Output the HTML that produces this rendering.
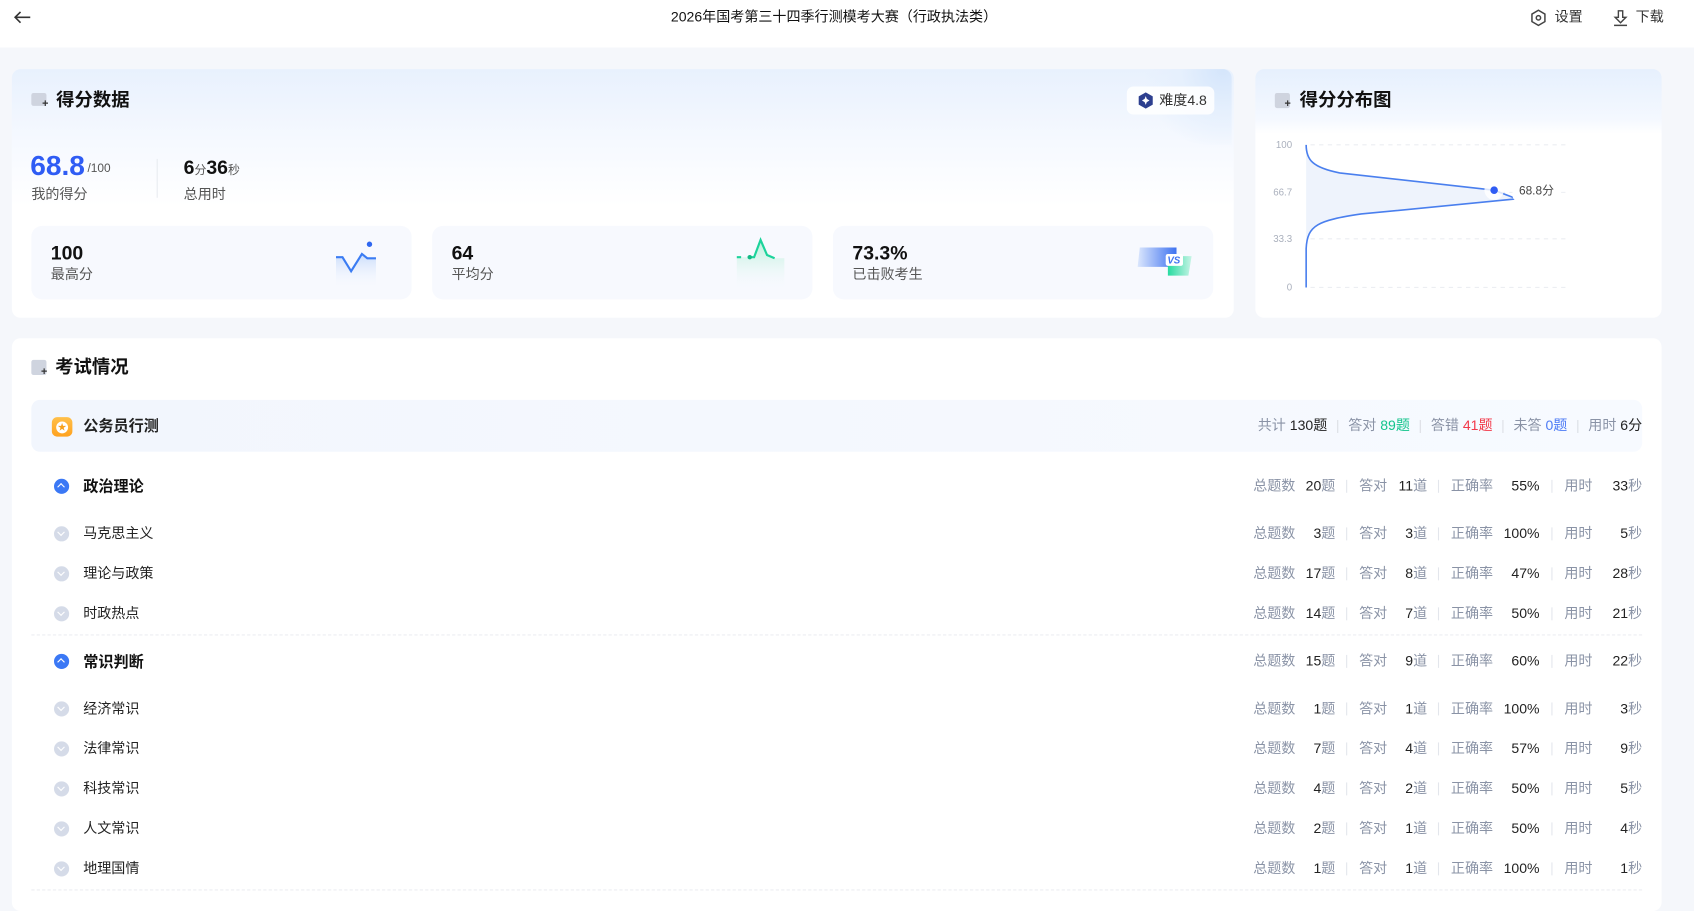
<!DOCTYPE html>
<html><head><meta charset="utf-8">
<style>
*{margin:0;padding:0;box-sizing:border-box}
html,body{width:1694px;height:897px;overflow:hidden;background:#f5f7fb}
body{font-family:"Liberation Sans","Noto Sans CJK SC",sans-serif;color:#222}
#w{position:absolute;left:0;top:0;width:1568px;height:831px;transform:scale(1.08036,1.0807);transform-origin:0 0;background:#f5f7fb}
.a{position:absolute;white-space:nowrap}
.card{position:absolute;background:#fff;border-radius:8px}
.ttl{font-size:17px;font-weight:bold;color:#111;line-height:22px}
.box{position:absolute;top:209px;width:352px;height:68px;background:#f7f9fe;border-radius:10px}
.box .n{position:absolute;left:18px;top:14px;font-size:18px;font-weight:bold;color:#111;line-height:22px}
.box .l{position:absolute;left:18px;top:36px;font-size:13px;color:#555;line-height:18px}
.row{position:absolute;left:0;width:1568px;height:20px;font-size:13px;line-height:18px}
.row>div{line-height:18px}
.row .nm{position:absolute;left:77px;top:0;color:#222}
.row .ic{position:absolute;left:50px;top:2px;width:14px;height:14px;border-radius:50%;background:#d5dbe8}
.row .ic:after{content:"";position:absolute;left:4px;top:3px;width:4px;height:4px;border-right:1.5px solid #fff;border-bottom:1.5px solid #fff;transform:rotate(45deg)}
.row.m .nm{font-weight:bold;font-size:14px;color:#111}
.row.m .ic{background:#3b78f5}
.row.m .ic:after{top:5px;transform:rotate(-135deg)}
.s{position:absolute;top:0;color:#8a93a6}
.v{position:absolute;top:0;color:#222;text-align:right}
.sep{position:absolute;top:3px;width:1px;height:12px;background:#e3e6ec}
.dash{position:absolute;left:29px;width:1491px;border-top:1px dashed #eceef2}
.hs{color:#dde0e6;margin:0 8px}
</style></head><body><div id="w">
<div class="a" style="left:0;top:0;width:1568px;height:44px;background:#fff"></div>
<svg class="a" style="left:12px;top:8px" width="18" height="16" viewBox="0 0 18 16"><path d="M16 8H2M7 3L2 8l5 5" fill="none" stroke="#333" stroke-width="1.5"/></svg>
<div class="a" style="left:0;width:1544px;top:7px;text-align:center;font-size:13px;color:#111;line-height:18px">2026年国考第三十四季行测模考大赛（行政执法类）</div>
<svg class="a" style="left:1416px;top:8px" width="16" height="17" viewBox="0 0 16 17"><path d="M8 1.5l6 3.5v7l-6 3.5-6-3.5v-7z" fill="none" stroke="#444" stroke-width="1.4"/><circle cx="8" cy="8.5" r="2" fill="none" stroke="#444" stroke-width="1.4"/></svg>
<div class="a" style="left:1439px;top:7px;font-size:13px;color:#333;line-height:18px">设置</div>
<svg class="a" style="left:1492px;top:8px" width="16" height="17" viewBox="0 0 16 17"><path d="M6 2h4v6h3l-5 5-5-5h3z" fill="none" stroke="#444" stroke-width="1.3"/><path d="M2 15.5h12" stroke="#444" stroke-width="1.4"/></svg>
<div class="a" style="left:1514px;top:7px;font-size:13px;color:#333;line-height:18px">下载</div>

<div class="card" style="left:11px;top:64px;width:1131px;height:230px;background:linear-gradient(180deg,#e8f1fd 0%,#f6f9ff 30%,#fff 55%)"></div>
<div class="a" style="left:1060px;top:64px;width:80px;height:70px;border-radius:0 8px 0 60px;background:radial-gradient(circle at 90% 0%,#d4e5fb 0,#e6f0fd 40%,rgba(255,255,255,0) 75%)"></div>
<div class="a" style="left:29px;top:86px;width:14px;height:12px;border-radius:2px;background:#cfd4df"></div>
<div class="a" style="left:39px;top:92px;font-size:10px;color:#333;font-weight:bold;line-height:10px">+</div>
<div class="a ttl" style="left:52px;top:82px">得分数据</div>
<div class="a" style="left:1043px;top:80px;width:81px;height:26px;background:rgba(255,255,255,.85);border-radius:6px"></div>
<svg class="a" style="left:1053px;top:85px" width="15" height="16" viewBox="0 0 15 16"><path d="M7.5 0.5l6.5 3.7v7.6l-6.5 3.7-6.5-3.7V4.2z" fill="#2c3f8f"/><path d="M7.5 4l1 2.5 2.5 1.5-2.5 1.5-1 2.5-1-2.5L4 8l2.5-1.5z" fill="#fff"/></svg>
<div class="a" style="left:1073px;top:84px;font-size:13px;color:#333;line-height:18px">难度4.8</div>

<div class="a" style="left:28px;top:138px;font-size:26px;font-weight:bold;color:#2f5cf4;line-height:30px">68.8</div>
<div class="a" style="left:81px;top:149px;font-size:11px;color:#555;line-height:14px">/100</div>
<div class="a" style="left:29px;top:171px;font-size:13px;color:#555;line-height:18px">我的得分</div>
<div class="a" style="left:145px;top:147px;width:1px;height:36px;background:#e8ebf0"></div>
<div class="a" style="left:170px;top:144px;font-size:18px;font-weight:bold;color:#111;line-height:22px">6<span style="font-size:11px;font-weight:normal;color:#555">分</span>36<span style="font-size:11px;font-weight:normal;color:#555">秒</span></div>
<div class="a" style="left:170px;top:171px;font-size:13px;color:#555;line-height:18px">总用时</div>

<div class="box" style="left:29px"><div class="n">100</div><div class="l">最高分</div>
<svg class="a" style="left:280px;top:10px" width="50" height="50" viewBox="0 0 50 50"><defs><linearGradient id="g1" x1="0" y1="0" x2="0" y2="1"><stop offset="0" stop-color="#c9dcfb"/><stop offset="1" stop-color="#f7f9fe" stop-opacity="0"/></linearGradient><linearGradient id="g2" x1="0" y1="0" x2="0" y2="1"><stop offset="0" stop-color="#b7f0d8"/><stop offset="1" stop-color="#f7f9fe" stop-opacity="0"/></linearGradient></defs><path d="M2 19h6l8 13 10-16 5 4h8v28H2z" fill="url(#g1)"/><path d="M2 19h6l8 13 10-16 5 4h8" fill="none" stroke="#3b7cf3" stroke-width="2"/><circle cx="33" cy="7" r="2.5" fill="#2f67f0"/></svg></div>
<div class="box" style="left:400px"><div class="n">64</div><div class="l">平均分</div>
<svg class="a" style="left:280px;top:10px" width="50" height="50" viewBox="0 0 50 50"><path d="M2 19h8l8 0 6-16 6 14 7 3h9v30H2z" fill="url(#g2)"/><path d="M2 19h4M12 19h6l6-16 6 14 7 3" fill="none" stroke="#1dd39b" stroke-width="2"/><circle cx="14" cy="19" r="2" fill="#14b985"/></svg></div>
<div class="box" style="left:771px"><div class="n">73.3%</div><div class="l">已击败考生</div>
<svg class="a" style="left:280px;top:18px" width="52" height="32" viewBox="0 0 52 32"><defs><linearGradient id="g3" x1="0" y1="0" x2="1" y2="0"><stop offset="0" stop-color="#dbe7fd"/><stop offset="1" stop-color="#3e72f0"/></linearGradient><linearGradient id="g4" x1="0" y1="0" x2="1" y2="0"><stop offset="0" stop-color="#27dba0"/><stop offset="1" stop-color="#c8f4e6"/></linearGradient></defs><path d="M4 2h34v18H2z" fill="url(#g3)"/><path d="M30 10h22l-3 18H30z" fill="url(#g4)"/><rect x="28" y="8" width="16" height="11" rx="2" fill="#fff"/><text x="29.5" y="17" font-size="9" font-weight="bold" font-style="italic" fill="#3f73f1" font-family="Liberation Sans">VS</text></svg></div>

<div class="card" style="left:1162px;top:64px;width:376px;height:230px;background:linear-gradient(180deg,#e6f0fd 0%,#f4f8ff 20%,#fff 26%)"></div>
<div class="a" style="left:1180px;top:86px;width:14px;height:14px;border-radius:2px;background:#cfd4df"></div>
<div class="a" style="left:1189px;top:92px;font-size:10px;color:#333;font-weight:bold;line-height:10px">+</div>
<div class="a ttl" style="left:1203px;top:82px">得分分布图</div>
<svg class="a" style="left:1170px;top:125px" width="300" height="150" viewBox="1170 125 300 150">
<g stroke="#eceef2" stroke-dasharray="4 4"><path d="M1213 134H1450M1213 178H1450M1213 221H1450M1213 266H1450"/></g>
<g font-size="9" fill="#aab0bd" text-anchor="end" font-family="Liberation Sans"><text x="1196" y="137">100</text><text x="1196" y="181">66.7</text><text x="1196" y="224">33.3</text><text x="1196" y="269">0</text></g>
<path d="M1209 134C1209 148 1215 155 1240 160L1383 176L1404 184L1260 198C1220 204 1210 208 1209 230V266z" fill="#eef3fc"/>
<path d="M1209 134C1209 148 1215 155 1240 160L1383 176L1404 184L1260 198C1220 204 1210 208 1209 230V266" fill="none" stroke="#4a7fee" stroke-width="1.5"/>
<circle cx="1383" cy="176" r="9" fill="#fff" opacity=".8"/><circle cx="1383" cy="176" r="3.5" fill="#2f5cf4"/>
<rect x="1400" y="166" width="42" height="20" rx="5" fill="#fff"/>
<text x="1406" y="180" font-size="11" fill="#444" font-family="Liberation Sans, Noto Sans CJK SC">68.8分</text>
</svg>

<div class="card" style="left:11px;top:313px;width:1527px;height:530px"></div>
<div class="a" style="left:29px;top:333px;width:14px;height:14px;border-radius:2px;background:#cfd4df"></div>
<div class="a" style="left:38px;top:340px;font-size:10px;color:#333;font-weight:bold;line-height:10px">+</div>
<div class="a ttl" style="left:51px;top:329px">考试情况</div>
<div class="a" style="left:29px;top:370px;width:1491px;height:48px;background:linear-gradient(90deg,#f2f6fd,#f7faff);border-radius:8px"></div>
<div class="a" style="left:48px;top:386px;width:19px;height:18px;border-radius:5px;background:linear-gradient(#ffc04a,#ffa21f)"></div>
<div class="a" style="left:52px;top:390px;width:11px;height:11px;border-radius:50%;background:#fff;color:#f7a01b;font-size:8px;text-align:center;line-height:11px">★</div>
<div class="a" style="left:77px;top:384px;font-size:14px;font-weight:bold;color:#222;line-height:20px">公务员行测</div>
<div class="a" style="right:48px;top:385px;font-size:13px;color:#8a93a6;line-height:18px">共计 <span style="color:#222">130题</span><span class="hs">|</span>答对 <span style="color:#13c48c">89题</span><span class="hs">|</span>答错 <span style="color:#f2394a">41题</span><span class="hs">|</span>未答 <span style="color:#4d7bf5">0题</span><span class="hs">|</span>用时 <span style="color:#222">6分</span></div>

<div id="rows"></div>
<div class="dash" style="top:587px"></div>
<div class="dash" style="top:823px"></div>
</div>
<script>
var d=[[441,1,"政治理论","20","11","55%","33"],[485,0,"马克思主义","3","3","100%","5"],[522,0,"理论与政策","17","8","47%","28"],[559,0,"时政热点","14","7","50%","21"],[603,1,"常识判断","15","9","60%","22"],[647,0,"经济常识","1","1","100%","3"],[684,0,"法律常识","7","4","57%","9"],[721,0,"科技常识","4","2","50%","5"],[758,0,"人文常识","2","1","50%","4"],[795,0,"地理国情","1","1","100%","1"]];
var h="";d.forEach(function(r){h+='<div class="row'+(r[1]?' m':'')+'" style="top:'+r[0]+'px"><div class="ic"></div><div class="nm">'+r[2]+'</div>'+
'<div class="s" style="left:1160px">总题数</div><div class="v" style="right:332px">'+r[3]+'<span style="color:#8a93a6">题</span></div><div class="sep" style="left:1246px"></div>'+
'<div class="s" style="left:1258px">答对</div><div class="v" style="right:247px">'+r[4]+'<span style="color:#8a93a6">道</span></div><div class="sep" style="left:1331px"></div>'+
'<div class="s" style="left:1343px">正确率</div><div class="v" style="right:143px">'+r[5]+'</div><div class="sep" style="left:1436px"></div>'+
'<div class="s" style="left:1448px">用时</div><div class="v" style="right:48px">'+r[6]+'<span style="color:#8a93a6">秒</span></div></div>';});
document.getElementById("rows").innerHTML=h;
</script>
</body></html>
